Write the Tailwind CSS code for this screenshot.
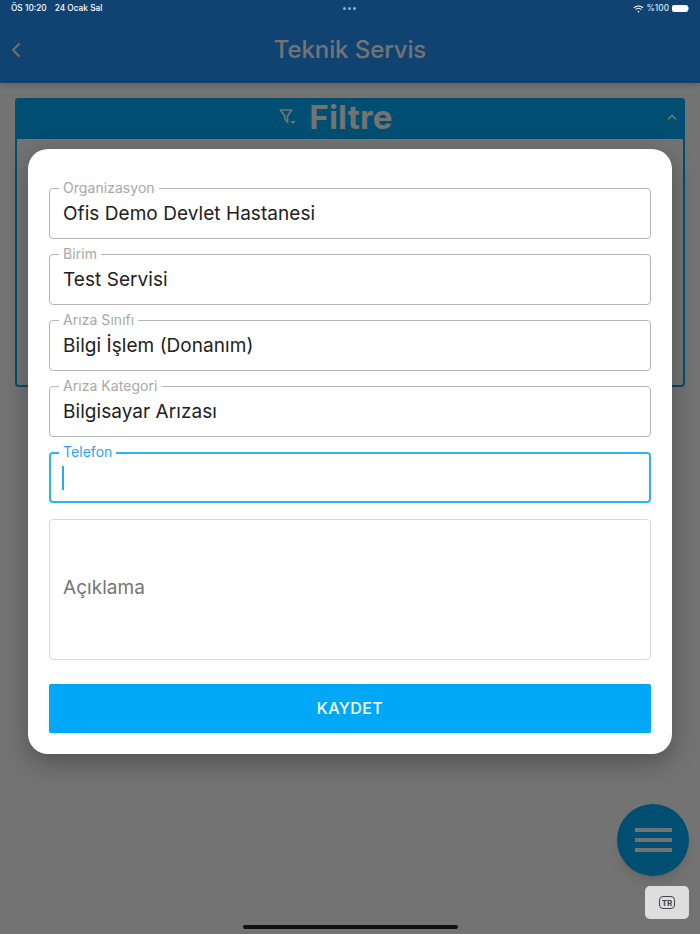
<!DOCTYPE html>
<html lang="tr">
<head>
  <meta charset="UTF-8" />
  <meta name="viewport" content="width=device-width, initial-scale=1.0" />
  <title>Teknik Servis</title>
  <script src="https://cdn.jsdelivr.net/npm/@tailwindcss/browser@4"></script>
</head>
<body class="relative w-[700px] h-[934px] overflow-hidden bg-white font-['Inter',sans-serif]">

  <!-- App bar -->
  <header class="h-[83px] bg-[#2493fd] shadow-md flex items-center pt-[17px] relative">
    <svg class="absolute left-[10px] top-[42px]" width="12" height="16" viewBox="0 0 12 16" fill="none" stroke="#fff" stroke-width="1.8"><path d="M9.5 1.5 3 8l6.500 6.500"/></svg>
    <h1 class="w-full text-center text-[24px] font-medium text-white tracking-[-0.1px]">Teknik Servis</h1>
  </header>

  <!-- Filter card -->
  <section class="mx-[15px] mt-[15px] h-[289px] rounded-[4px] border-2 border-[#00adfb] bg-white">
    <div class="h-[41px] -mt-[2px] -mx-[2px] rounded-t-[4px] bg-[#00adfb] flex items-center justify-center relative">
      <svg class="absolute left-[263px] top-[9px]" width="20" height="20" viewBox="0 0 20 20" fill="none" stroke="#fff" stroke-width="1.7"><path d="M2.500 3h11L9.500 9v6L6.800 12V9Z"/><path d="M12 14h6l-3 3Z" fill="#fff" stroke="none"/></svg>
      <span class="text-[33px] font-bold text-white leading-none pl-[2px] pb-[2px] tracking-[0.2px]">Filtre</span>
      <svg class="absolute right-[8px] top-[16px]" width="10" height="7" viewBox="0 0 10 7" fill="none" stroke="#fff" stroke-width="1.6"><path d="M1 5.500 5 1.500l4 4"/></svg>
    </div>
  </section>

  <!-- FAB under the scrim -->
  <div class="absolute left-[617px] top-[804px] w-[72px] h-[72px] rounded-full bg-[#00adfb] shadow-lg flex flex-col items-center justify-center gap-[6px]">
    <span class="w-[37px] h-[4px] bg-white"></span>
    <span class="w-[37px] h-[4px] bg-white"></span>
    <span class="w-[37px] h-[4px] bg-white"></span>
  </div>

  <!-- Scrim -->
  <div class="absolute inset-0 bg-black/55"></div>

  <!-- Status bar -->
  <div class="absolute top-0 left-0 w-full h-[17px] flex items-center justify-between pl-[11px] pr-[11px] text-white text-[8.3px] font-medium">
    <div class="flex gap-[8px]"><span>ÖS 10:20</span><span>24 Ocak Sal</span></div>
    <div class="flex items-center gap-[3px]">
      <svg width="11" height="8" viewBox="0 0 13 9" fill="none" stroke="#fff" stroke-width="1.300"><path d="M1 3.200a8 8 0 0 1 11 0"/><path d="M3 5.200a5.200 5.200 0 0 1 7 0"/><circle cx="6.500" cy="7.500" r="1" fill="#fff" stroke="none"/></svg>
      <span class="text-[#dfe7ef]">%100</span>
      <div class="flex items-center">
        <div class="w-[16px] h-[7px] rounded-[2px] bg-white"></div>
        <div class="w-[1px] h-[3px] bg-white/50"></div>
      </div>
    </div>
  </div>
  <div class="absolute left-[343px] top-[7px] flex gap-[2px]">
    <span class="w-[3px] h-[3px] rounded-full bg-[#7db4e6]"></span>
    <span class="w-[3px] h-[3px] rounded-full bg-[#7db4e6]"></span>
    <span class="w-[3px] h-[3px] rounded-full bg-[#7db4e6]"></span>
  </div>

  <!-- Dialog -->
  <div class="absolute left-[28px] top-[149px] w-[644px] h-[605px] rounded-[20px] bg-white shadow-[0_8px_24px_rgba(0,0,0,0.3)] px-[21px] pt-[39px]">
    <div class="flex flex-col gap-[15px]">
      <div class="relative h-[51px] rounded-[4px] border border-[#b5b5b5] flex items-center pl-[13px] pt-[2px] text-[19px] tracking-[0.05px] text-[#212121]">
        Ofis Demo Devlet Hastanesi
        <label class="absolute left-[9px] -top-[10px] bg-white px-[4px] text-[14px] leading-[17px] tracking-[0.05px] text-[#a8a8a8]">Organizasyon</label>
      </div>
      <div class="relative h-[51px] rounded-[4px] border border-[#b5b5b5] flex items-center pl-[13px] pt-[2px] text-[19px] tracking-[0.05px] text-[#212121]">
        Test Servisi
        <label class="absolute left-[9px] -top-[10px] bg-white px-[4px] text-[14px] leading-[17px] tracking-[0.05px] text-[#a8a8a8]">Birim</label>
      </div>
      <div class="relative h-[51px] rounded-[4px] border border-[#b5b5b5] flex items-center pl-[13px] pt-[2px] text-[19px] tracking-[0.05px] text-[#212121]">
        Bilgi İşlem (Donanım)
        <label class="absolute left-[9px] -top-[10px] bg-white px-[4px] text-[14px] leading-[17px] tracking-[0.05px] text-[#a8a8a8]">Arıza Sınıfı</label>
      </div>
      <div class="relative h-[51px] rounded-[4px] border border-[#b5b5b5] flex items-center pl-[13px] pt-[2px] text-[19px] tracking-[0.05px] text-[#212121]">
        Bilgisayar Arızası
        <label class="absolute left-[9px] -top-[10px] bg-white px-[4px] text-[14px] leading-[17px] tracking-[0.05px] text-[#a8a8a8]">Arıza Kategori</label>
      </div>
      <div class="relative h-[51px] rounded-[4px] border-2 border-[#29b6f6] flex items-center px-[11px]">
        <span class="w-[2px] h-[24px] bg-[#29a9f0]"></span>
        <label class="absolute left-[8px] -top-[11px] bg-white px-[4px] text-[14px] leading-[17px] tracking-[0.05px] text-[#2aa5f5]">Telefon</label>
      </div>
      <div class="h-[141px] rounded-[4px] border border-[#d8d8d8] flex items-center pl-[13px] pb-[2px] text-[19px] tracking-[0.05px] text-[#757575] mt-[1px]">
        Açıklama
      </div>
    </div>
    <button class="mt-[24px] w-full h-[49px] rounded-[2px] bg-[#00a8f7] shadow-sm text-white text-[16px] font-medium tracking-[0.4px] pb-[2px]">KAYDET</button>
  </div>

  <!-- Language button -->
  <div class="absolute left-[645px] top-[886px] w-[44px] h-[33px] rounded-[5px] bg-[#dedede] flex items-center justify-center">
    <span class="w-[16px] h-[13px] rounded-[4px] border-[1.5px] border-[#444] text-[8px] font-bold leading-none text-[#444] flex items-center justify-center">TR</span>
  </div>

  <!-- Home indicator -->
  <div class="absolute left-[243px] top-[925px] w-[215px] h-[4px] rounded-full bg-[#111]"></div>
</body>
</html>
